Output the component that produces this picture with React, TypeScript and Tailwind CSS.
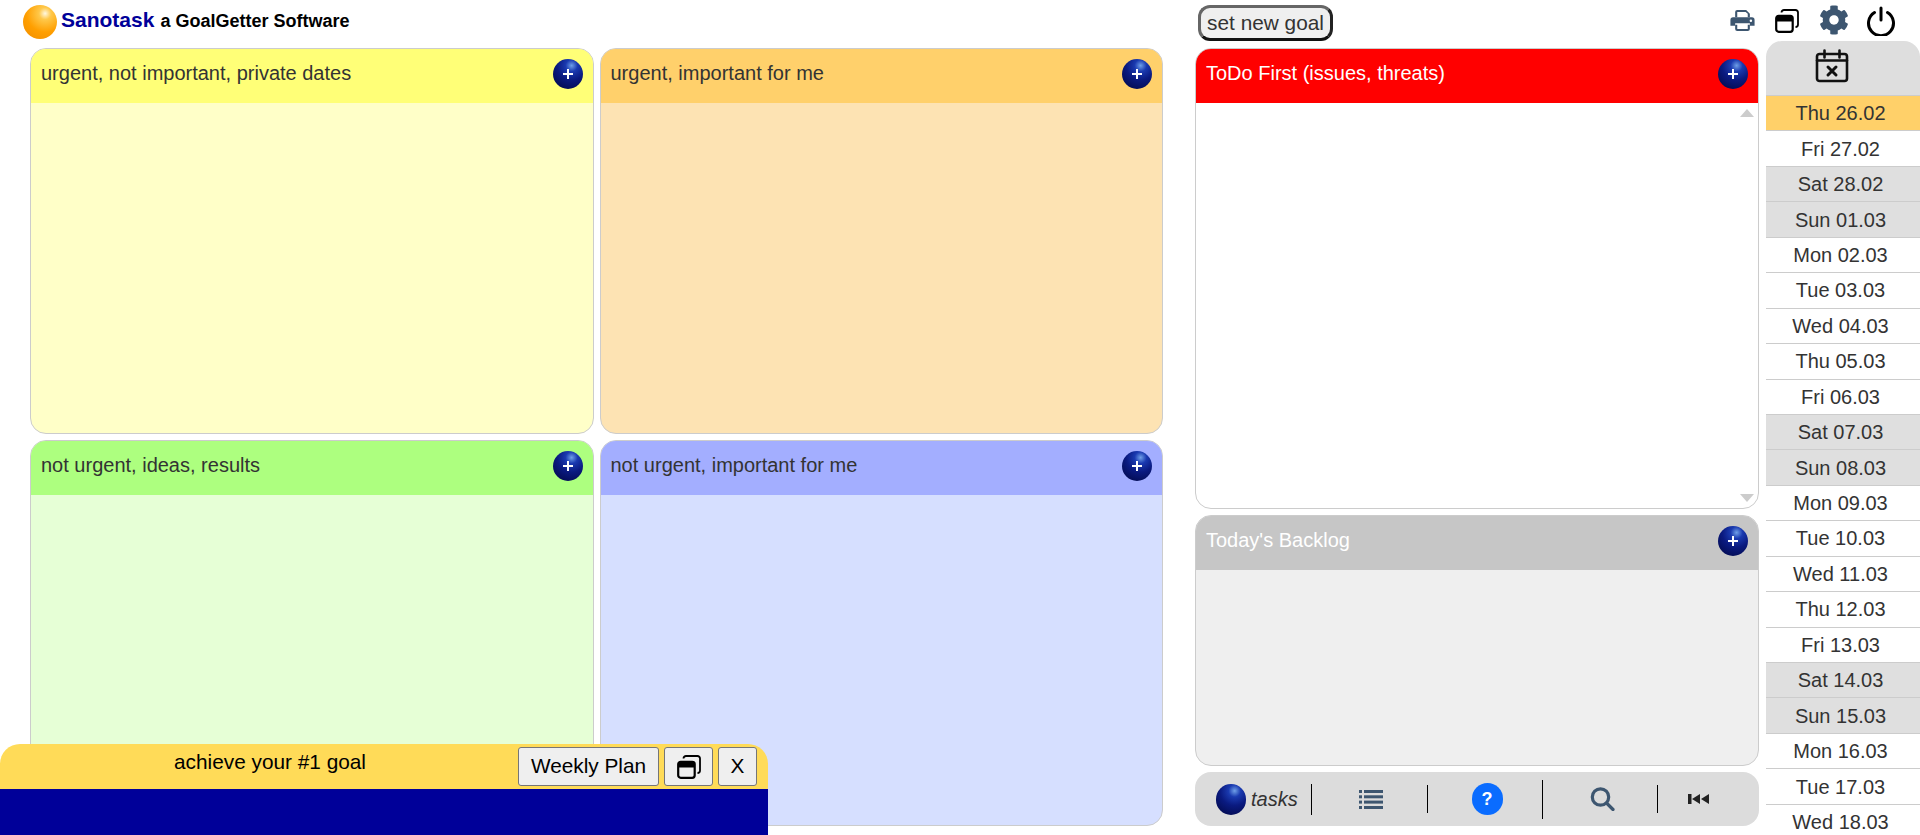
import { FaCog } from 'react-icons/fa'

const DATES = [
  { label: 'Thu 26.02', kind: 'today' },
  { label: 'Fri 27.02' },
  { label: 'Sat 28.02', kind: 'weekend' },
  { label: 'Sun 01.03', kind: 'weekend' },
  { label: 'Mon 02.03' },
  { label: 'Tue 03.03' },
  { label: 'Wed 04.03' },
  { label: 'Thu 05.03' },
  { label: 'Fri 06.03' },
  { label: 'Sat 07.03', kind: 'weekend' },
  { label: 'Sun 08.03', kind: 'weekend' },
  { label: 'Mon 09.03' },
  { label: 'Tue 10.03' },
  { label: 'Wed 11.03' },
  { label: 'Thu 12.03' },
  { label: 'Fri 13.03' },
  { label: 'Sat 14.03', kind: 'weekend' },
  { label: 'Sun 15.03', kind: 'weekend' },
  { label: 'Mon 16.03' },
  { label: 'Tue 17.03' },
  { label: 'Wed 18.03' },
]

function BlueBall({ className, plus }: { className: string; plus?: boolean }) {
  return (
    <div className={`${className} rounded-full flex items-center justify-center shrink-0 bg-[radial-gradient(circle_at_62%_22%,#6f9fe8_0%,#1a3ab0_20%,#0a1a80_48%,#010640_100%)]`}>
      {plus && (
        <svg width="12" height="12" viewBox="0 0 12 12">
          <path d="M6 1v10M1 6h10" stroke="#fff" strokeWidth="2" />
        </svg>
      )}
    </div>
  )
}

function WindowsIcon({ size }: { size: number }) {
  return (
    <svg width={size} height={size} viewBox="0 0 24 24" fill="none">
      <rect x="1.2" y="6.8" width="16.5" height="16" rx="2.5" stroke="#000" strokeWidth="2.2" />
      <path d="M1.2 9.3a2.5 2.5 0 0 1 2.5-2.5h11.5a2.5 2.5 0 0 1 2.5 2.5V12.5h-16.5z" fill="#000" />
      <path d="M6.5 3.5a2.5 2.5 0 0 1 2.5-2.5h11.5a2.5 2.5 0 0 1 2.5 2.5v12a2.5 2.5 0 0 1-2.5 2.5" stroke="#000" strokeWidth="1.8" />
    </svg>
  )
}

function Panel({ title, head, body, titleColor = 'text-[#333]', className, children }: {
  title: string
  head: string
  body: string
  titleColor?: string
  className: string
  children?: React.ReactNode
}) {
  return (
    <div className={`${className} ${body} rounded-[16px] border border-[#ccc] overflow-hidden flex flex-col`}>
      <div className={`${head} h-[54px] shrink-0 flex items-center justify-between pl-[10px] pr-[10px] pb-[4px]`}>
        <span className={`${titleColor} text-[20px] mb-[2px]`}>{title}</span>
        <BlueBall className="w-[30px] h-[30px]" plus />
      </div>
      {children}
    </div>
  )
}

export default function App() {
  return (
    <div className="relative w-[1920px] h-[835px] overflow-hidden bg-white flex font-['Liberation_Sans',Arial,sans-serif]">
      {/* Left: logo + quadrants */}
      <div className="w-[1195px] shrink-0 flex flex-col">
        <div className="h-[48px] flex items-start pl-[23px] pt-[5px]">
          <div className="w-[34px] h-[34px] rounded-full shrink-0 bg-[radial-gradient(circle_at_65%_25%,#fff8e0_0%,#ffc84a_18%,#ff9f00_55%,#f08c00_100%)]" />
          <span className="ml-[4px] mt-[2px] text-[21px] font-bold text-[#000099] leading-[26px]">Sanotask</span>
          <span className="ml-[6px] mt-[3px] text-[18px] font-bold text-black leading-[26px]">a GoalGetter Software</span>
        </div>
        <div className="grid grid-cols-2 gap-x-[6px] gap-y-[6px] pl-[30px] pr-[32px]">
          <Panel className="h-[386px]" title="urgent, not important, private dates" head="bg-[#ffff77]" body="bg-[#ffffc8]" />
          <Panel className="h-[386px]" title="urgent, important for me" head="bg-[#ffd06b]" body="bg-[#fde3b3]" />
          <Panel className="h-[386px]" title="not urgent, ideas, results" head="bg-[#adff7f]" body="bg-[#e6ffd6]" />
          <Panel className="h-[386px]" title="not urgent, important for me" head="bg-[#a3aeff]" body="bg-[#d6dfff]" />
        </div>
      </div>

      {/* Right: goal button, icons, today panels, calendar */}
      <div className="flex-1 flex flex-col">
        <div className="h-[41px] shrink-0 flex items-start relative">
          <button className="ml-[3px] mt-[5px] h-[36px] w-[135px] rounded-[12px] border-[3px] border-[#666] border-b-[#111] border-r-[#222] bg-[#efefef] text-[20.8px] text-[#333] leading-none">set new goal</button>
          <div className="ml-[397px] mt-[10px]">
            <svg width="25" height="21" viewBox="0 0 23 20" fill="#3d5670">
              <path fillRule="evenodd" d="M4.5 7V2a2 2 0 0 1 2-2h8.5l3.5 3.5V7H16.5V3.5L14.5 2h-8v5z" />
              <path fillRule="evenodd" d="M2.5 7h18a2.5 2.5 0 0 1 2.5 2.5V15h-4.5v-2.5h-14V15H0V9.500A2.500 2.500 0 0 1 2.500 7zM19.500 9a1.200 1.200 0 1 0 0 2.400 1.200 1.200 0 0 0 0-2.400z" />
              <path fillRule="evenodd" d="M4.500 14h2v4h10v-4h2v4a2 2 0 0 1-2 2h-10a2 2 0 0 1-2-2z" />
            </svg>
          </div>
          <div className="ml-[20px] mt-[9px]"><WindowsIcon size={24} /></div>
          <div className="ml-[20px] mt-[5px] text-[#3d5670]"><FaCog size={30} /></div>
          <div className="ml-[17px] mt-[6px]">
            <svg width="30" height="30" viewBox="0 0 30 30" fill="none" stroke="#000" strokeWidth="3" strokeLinecap="round">
              <path d="M15 2v12" />
              <path d="M8.5 6.500a12.500 12.500 0 1 0 13 0" />
            </svg>
          </div>
        </div>

        <div className="flex-1 flex min-h-0">
          <div className="w-[564px] shrink-0 pt-[7px] flex flex-col">
            <Panel className="h-[461px]" title="ToDo First (issues, threats)" titleColor="text-white" head="bg-[#ff0000]" body="bg-white">
              <div className="flex-1 flex flex-col justify-between items-end pr-[4px] pt-[6px] pb-[6px]">
                <div className="w-0 h-0 border-x-[7.5px] border-x-transparent border-b-[8px] border-b-[#ccc]" />
                <div className="w-0 h-0 border-x-[7.5px] border-x-transparent border-t-[8px] border-t-[#ccc]" />
              </div>
            </Panel>
            <Panel className="h-[251px] mt-[6px]" title="Today's Backlog" titleColor="text-white" head="bg-[#c6c6c6]" body="bg-[#efefef]" />
            <div className="h-[54px] mt-[6px] rounded-[16px] bg-[#dcdcdc] grid grid-cols-[117px_116px_115px_115px_1fr] items-center">
              <div className="h-[31px] border-r border-black flex items-center pl-[21px]">
                <BlueBall className="w-[30px] h-[31px]" />
                <span className="ml-[5px] text-[20px] italic text-[#333]">tasks</span>
              </div>
              <div className="h-[28px] border-r border-black flex items-center justify-center pl-[2px]">
                <svg width="24" height="19" viewBox="0 0 24 19" fill="#3d5670">
                  <rect x="0" y="0" width="3" height="3" />
                  <rect x="5" y="0" width="19" height="3" />
                  <rect x="0" y="5.300" width="3" height="3" />
                  <rect x="5" y="5.300" width="19" height="3" />
                  <rect x="0" y="10.600" width="3" height="3" />
                  <rect x="5" y="10.600" width="19" height="3" />
                  <rect x="0" y="16" width="3" height="3" />
                  <rect x="5" y="16" width="19" height="3" />
                </svg>
              </div>
              <div className="h-[39px] border-r border-black flex items-center justify-center pl-[4px]">
                <div className="w-[31px] h-[32px] rounded-full bg-[#0a6cff] flex items-center justify-center text-white font-bold text-[18px] leading-none">?</div>
              </div>
              <div className="h-[28px] border-r border-black flex items-center justify-center pl-[6px]">
                <svg width="26" height="24" viewBox="0 0 26 24" fill="none" stroke="#3d5670" strokeWidth="3.2" strokeLinecap="round">
                  <circle cx="10.500" cy="10" r="8.200" />
                  <path d="M17 16.500l6 6" />
                </svg>
              </div>
              <div className="flex items-center justify-center pr-[20px]">
                <svg width="21" height="10" viewBox="0 0 21 10" fill="#222">
                  <rect x="0" y="0" width="3.500" height="10" />
                  <path d="M12 0v10L4 5zM21 0v10l-8-5z" />
                </svg>
              </div>
            </div>
          </div>

          <div className="ml-[7px] flex-1 flex flex-col">
            <div className="h-[55px] shrink-0 rounded-t-[16px] bg-[#dedede] border-b border-[#ccc] flex items-start pl-[49px] pt-[8px]">
              <svg width="34" height="34" viewBox="0 0 34 34" fill="none" stroke="#111" strokeWidth="2.600" strokeLinecap="round" strokeLinejoin="round">
                <rect x="2" y="5" width="30" height="27" rx="2.500" />
                <path d="M2 11.500h30M9.500 1.500v7M24.500 1.500v7" />
                <path d="M13 18l8 8M21 18l-8 8" strokeWidth="3" />
              </svg>
            </div>
            {DATES.map(d => (
              <div
                key={d.label}
                className={`h-[35.45px] shrink-0 border-b border-[#ccc] pr-[5px] flex items-center justify-center text-[20px] text-[#333] ${
                  d.kind === 'today' ? 'bg-[#ffd069]' : d.kind === 'weekend' ? 'bg-[#dfdfdf]' : 'bg-white'
                }`}
              >
                {d.label}
              </div>
            ))}
          </div>
        </div>
      </div>

      {/* Floating goal window */}
      <div className="absolute left-0 top-[744px] w-[768px] h-[91px] flex flex-col">
        <div className="h-[45px] shrink-0 rounded-t-[20px] bg-[#ffdb58] flex items-start">
          <div className="w-[518px] pl-[22px] pt-[5px] text-center text-[20.8px] text-black leading-[26px]">achieve your #1 goal</div>
          <button className="mt-[3px] h-[39px] w-[141px] pb-[2px] rounded-[3px] border border-[#767676] bg-[#efefef] text-[20.8px] text-black">Weekly Plan</button>
          <button className="ml-[5px] mt-[3px] h-[39px] w-[49px] rounded-[3px] border border-[#767676] bg-[#efefef] flex items-center justify-center"><WindowsIcon size={24} /></button>
          <button className="ml-[5px] mt-[3px] h-[39px] w-[39px] pb-[2px] rounded-[3px] border border-[#767676] bg-[#efefef] text-[20.8px] text-black">X</button>
        </div>
        <div className="flex-1 bg-[#000099]" />
      </div>
    </div>
  )
}
